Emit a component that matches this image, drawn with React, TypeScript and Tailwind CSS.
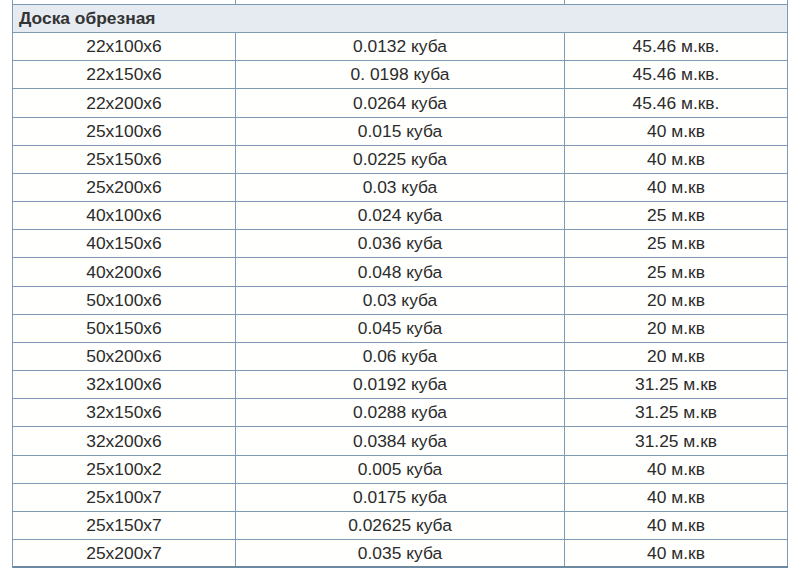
const rows: [string, string, string][] = [
  ["22x100x6", "0.0132 куба", "45.46 м.кв."],
  ["22x150x6", "0. 0198 куба", "45.46 м.кв."],
  ["22x200x6", "0.0264 куба", "45.46 м.кв."],
  ["25x100x6", "0.015 куба", "40 м.кв"],
  ["25x150x6", "0.0225 куба", "40 м.кв"],
  ["25x200x6", "0.03 куба", "40 м.кв"],
  ["40x100x6", "0.024 куба", "25 м.кв"],
  ["40x150x6", "0.036 куба", "25 м.кв"],
  ["40x200x6", "0.048 куба", "25 м.кв"],
  ["50x100x6", "0.03 куба", "20 м.кв"],
  ["50x150x6", "0.045 куба", "20 м.кв"],
  ["50x200x6", "0.06 куба", "20 м.кв"],
  ["32x100x6", "0.0192 куба", "31.25 м.кв"],
  ["32x150x6", "0.0288 куба", "31.25 м.кв"],
  ["32x200x6", "0.0384 куба", "31.25 м.кв"],
  ["25x100x2", "0.005 куба", "40 м.кв"],
  ["25x100x7", "0.0175 куба", "40 м.кв"],
  ["25x150x7", "0.02625 куба", "40 м.кв"],
  ["25x200x7", "0.035 куба", "40 м.кв"],
];

const cols = "grid grid-cols-[223px_329px_223px]";
const cell = "border-r border-[#7f9ab3] flex items-center justify-center";

export default function App() {
  return (
    <div
      className="w-[800px] h-[568px] bg-white overflow-hidden text-[17.4px] text-[#2b2b2b]"
      style={{ fontFamily: '"Liberation Sans", Arial, sans-serif' }}
    >
      <div className="ml-[12px] w-[776px] border-l border-[#7f9ab3]">
        <div className={`${cols} h-[5px] border-b border-[#7f9ab3]`}>
          <div className={cell} />
          <div className={cell} />
          <div className={cell} />
        </div>
        <div className="h-[28px] bg-[#e5ebf1] border-b border-r border-[#7f9ab3] flex items-center pl-[6px] font-bold text-[#333]">
          Доска обрезная
        </div>
        {rows.map((r, i) => (
          <div
            key={i}
            className={`${cols} ${i % 6 === 2 ? "h-[29px]" : "h-[28px]"} bg-[#fffffd] ${
              i === rows.length - 1 ? "border-b-2 border-[#6d88a1]" : "border-b border-[#7f9ab3]"
            }`}
          >
            <div className={cell}>{r[0]}</div>
            <div className={cell}>{r[1]}</div>
            <div className={cell}>{r[2]}</div>
          </div>
        ))}
      </div>
    </div>
  );
}
